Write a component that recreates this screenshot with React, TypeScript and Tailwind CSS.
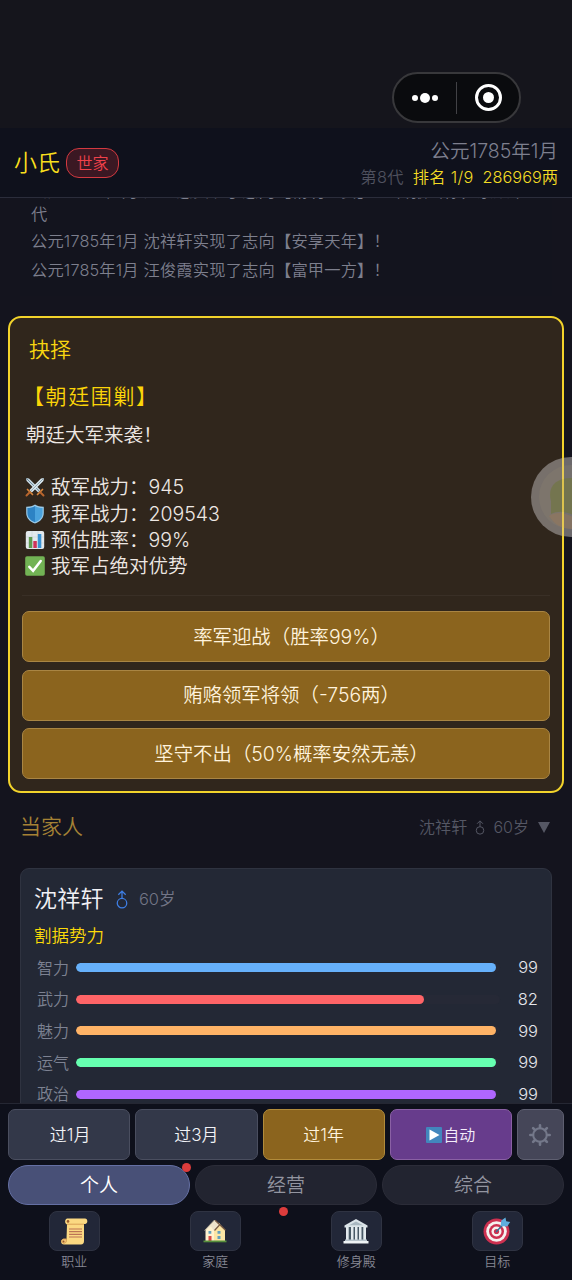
import React from "react";

const STATS = [
  { label: "智力", value: 99, color: "#66b1fb" },
  { label: "武力", value: 82, color: "#ff6467" },
  { label: "魅力", value: 99, color: "#ffb366" },
  { label: "运气", value: 99, color: "#66ffb0" },
  { label: "政治", value: 99, color: "#b066ff" },
];

function Swords() {
  return (
    <svg viewBox="0 0 20 20" className="h-5 w-5">
      <path d="M1 1l3 .6L15.5 13l-2.4 2.4L1.6 4z" fill="#c9dbe6" />
      <path d="M1 1l13.4 13.2" stroke="#6d8795" strokeWidth="1" />
      <path d="M19 1l-3 .6L4.500 13l2.4 2.4L18.4 4z" fill="#dce9f0" />
      <path d="M19 1L5.600 14.200" stroke="#8ba3b0" strokeWidth="1" />
      <path d="M2.500 12.500l5 5M17.500 12.500l-5 5" stroke="#d8843b" strokeWidth="1.700" strokeLinecap="round" />
      <path d="M4.500 15.500l-3 3M15.500 15.500l3 3" stroke="#b9652d" strokeWidth="2" strokeLinecap="round" />
    </svg>
  );
}

function Shield() {
  return (
    <svg viewBox="0 0 20 20" className="h-5 w-5">
      <path d="M10 .6C7.500 2.200 4.500 2.900 1.200 2.800v6C1.200 14 4.500 17.600 10 19.600c5.500-2 8.800-5.600 8.800-10.800v-6C15.500 2.900 12.500 2.200 10 .6z" fill="#9ccbe8" />
      <path d="M10 2C7.700 3.400 5.200 4 2.400 4v5c0 4.400 2.800 7.500 7.600 9.300z" fill="#2d83c4" />
      <path d="M10 2c2.300 1.400 4.800 2 7.600 2v5c0 4.400-2.800 7.500-7.600 9.300z" fill="#4ba3dd" />
    </svg>
  );
}

function Chart() {
  return (
    <svg viewBox="0 0 20 20" className="h-5 w-5">
      <rect x=".8" y="1" width="18.400" height="18" rx="2" fill="#e3e9ec" />
      <path d="M7 1v18M13 1v18M1 7h18M1 13h18" stroke="#cbd5da" strokeWidth=".6" />
      <rect x="3.800" y="7" width="3.500" height="11" fill="#5f9a50" />
      <rect x="8.300" y="11" width="3.500" height="7" fill="#cf3359" />
      <rect x="12.800" y="4" width="3.500" height="14" fill="#3b93d3" />
    </svg>
  );
}

function Check() {
  return (
    <svg viewBox="0 0 20 20" className="h-5 w-5">
      <rect x=".2" y=".3" width="19.600" height="19.400" rx="1.800" fill="#72b354" />
      <path d="M4.300 10.800l3.800 4L15.700 5" fill="none" stroke="#fff" strokeWidth="2.500" strokeLinecap="round" />
    </svg>
  );
}

function Male({ className }: { className: string }) {
  return (
    <svg viewBox="0 0 12 18" className={className} fill="none" stroke="currentColor" strokeWidth="1.200">
      <circle cx="6" cy="12.500" r="4.500" />
      <path d="M6 8V1.200M2.500 4.500L6 1l3.500 3.500" />
    </svg>
  );
}

function Scroll() {
  return (
    <svg viewBox="0 0 28 28" className="h-7 w-7">
      <path d="M7 1.500h18c3 0 3.200 5 0 5.500h-1v17c0 2-1 3.500-3 3.500H4c-3.500 0-4-5-.5-5.500h3L7 7.500C4.500 6.500 4.500 2.500 7 1.500z" fill="#fbd982" />
      <path d="M7 7.200h17M6.500 22h-3c-2.800 1-2 4.200.5 4.200 2 0 2.500-1.500 2.500-4.200z" stroke="#d9a056" strokeWidth="1" fill="#f4c779" />
      <circle cx="8" cy="4.400" r="1.300" fill="#96582b" />
      <path d="M9 12h13M9 14.700h13M9 17.400h13M9 20h13" stroke="#bc7355" strokeWidth="1.200" />
      <circle cx="3.500" cy="24.500" r="1" fill="#96582b" />
    </svg>
  );
}

function House() {
  return (
    <svg viewBox="0 0 24 24" className="h-6 w-6">
      <path d="M2.500 11L8 5l5 6v11H2.500z" fill="#fff2cf" />
      <path d="M11 10l5-6 6 7V22H11z" fill="#fce6a5" />
      <path d="M1.500 11.500L11.500 1l5.500 4-6 7L8 7.500z" fill="#eee3cb" />
      <path d="M12 1.200l10.500 10M11.500 11.500L16.500 6" stroke="#795b45" strokeWidth="1.200" />
      <path d="M1.500 11.500L11.500 1" stroke="#b8ae98" strokeWidth=".8" />
      <rect x="5.500" y="17" width="3" height="5" fill="#d84945" />
      <path d="M5.500 12h2.800v2.800H5.500zM14.500 12h3v2.800h-3zM14.500 17h3v3h-3z" fill="#63a1bd" />
      <rect x=".5" y="21.500" width="23" height="1.800" fill="#578f3c" />
    </svg>
  );
}

function Temple() {
  return (
    <svg viewBox="0 0 26 26" className="h-[26px] w-[26px]">
      <path d="M1.500 7.500L13 1l11.500 6.500v2h-23z" fill="#dbe4e9" />
      <path d="M6 7.300L13 3.500l7 3.800z" fill="#a8b7c0" />
      <rect x="3" y="9" width="20" height="14" fill="#485966" />
      <path d="M3 9h2.700v13H3zM8 9h2.500v13H8zM12 9h2.500v13H12zM16 9h2.500v13H16zM20.300 9H23v13h-2.700z" fill="#e3eaee" />
      <path d="M2 21.500h22V23H2z" fill="#b7c4cc" />
      <path d="M.5 23h25v2.500H.5z" fill="#eef3f5" />
    </svg>
  );
}

function Target() {
  return (
    <svg viewBox="0 0 28 28" className="h-7 w-7">
      <circle cx="13.500" cy="14.500" r="13" fill="#cd3050" />
      <circle cx="13.500" cy="14.500" r="10.300" fill="#f5f1ef" />
      <circle cx="13.500" cy="14.500" r="7.500" fill="#cd3050" />
      <circle cx="13.500" cy="14.500" r="5" fill="#f5f1ef" />
      <circle cx="13.500" cy="14.500" r="2.600" fill="#cd3050" />
      <path d="M13 15l8-8.500" stroke="#2f7195" strokeWidth="1.400" />
      <path d="M17.500 9l.8-5.500L22.500.5l.7 3.800 4 .7-3 4.500z" fill="#5eaede" />
    </svg>
  );
}

function Gear() {
  return (
    <svg viewBox="0 0 22 22" className="h-[22px] w-[22px]" fill="none" stroke="#74788a">
      <circle cx="11" cy="11" r="6.800" strokeWidth="2" />
      <path
        d="M11 1.300v2.700M11 18v2.700M1.300 11H4M18 11h2.700M4.100 4.100L6 6M16 16l1.900 1.900M17.900 4.100L16 6M6 16l-1.900 1.900"
        strokeWidth="2.600"
        strokeLinecap="round"
      />
    </svg>
  );
}

const NAV = [
  { label: "职业", icon: <Scroll /> },
  { label: "家庭", icon: <House /> },
  { label: "修身殿", icon: <Temple /> },
  { label: "目标", icon: <Target /> },
];

export default function App() {
  return (
    <div className="relative flex h-[1280px] w-[572px] flex-col overflow-hidden bg-[#14141e] font-['Inter','Noto_Sans_CJK_SC',sans-serif] font-[350] whitespace-nowrap">
      <div className="flex h-32 shrink-0 justify-end bg-[#15151c] pt-[72px] pr-[51px]">
        <div className="flex h-[51px] w-[129px] items-center rounded-full border-2 border-[#38383b] bg-[#0a0b0e]">
          <div className="flex w-[61px] items-center justify-center gap-[2px]">
            <i className="h-[6px] w-[6px] rounded-full bg-white" />
            <i className="h-[10px] w-[10px] rounded-full bg-white" />
            <i className="h-[6px] w-[6px] rounded-full bg-white" />
          </div>
          <div className="ml-px h-8 w-px bg-[#424246]" />
          <div className="flex flex-1 justify-center pl-px">
            <div className="flex h-[27px] w-[27px] items-center justify-center rounded-full border-[3px] border-white">
              <i className="h-[11px] w-[11px] rounded-full bg-white" />
            </div>
          </div>
        </div>
      </div>

      <header className="flex h-[70px] shrink-0 items-center justify-between border-b border-[#2b2d3b] bg-[#0f111c] pr-[14px] pl-[14px]">
        <div className="flex items-center gap-[6px]">
          <span className="pt-px text-[23px] leading-8 text-[#f8df1c]">小氏</span>
          <span className="flex h-[30px] w-[53px] items-center justify-center rounded-[13px] border border-[#d33940] bg-[#3b1823] text-[16px] text-[#f0414a]">
            世家
          </span>
        </div>
        <div className="flex flex-col items-end pt-[3px]">
          <span className="text-[19.500px] leading-[26px] text-[#7d7f8e]">公元1785年1月</span>
          <span className="flex text-[16.300px] leading-[26px] text-[#f4dc24]">
            <span className="mr-[9px] tracking-[0.300px] text-[#50525f]">第8代</span>
            <span className="mr-[9px] tracking-[0.300px]">排名 1/9</span>
            <span>286969两</span>
          </span>
        </div>
      </header>

      <main className="flex h-[905px] shrink-0 flex-col overflow-hidden">
        <section className="mx-5 h-[98px] shrink-0 overflow-hidden bg-[#13141e] pl-[11px] text-[16.300px] tracking-[0.150px] text-[#7d7f8d]">
          <div className="-mt-[18px] h-[22px] leading-[22px]">公元1785年1月 汪益志实现了志向【精明进贤】！ 曾报当你，家族下一世</div>
          <div className="h-[22px] leading-[24px]">代</div>
          <div className="mt-1 h-[29px] leading-[27px]">公元1785年1月 沈祥轩实现了志向【安享天年】！</div>
          <div className="h-[29px] leading-[27px]">公元1785年1月 汪俊霞实现了志向【富甲一方】！</div>
        </section>

        <section className="mx-2 mt-5 flex h-[477px] shrink-0 flex-col rounded-[13px] border-2 border-[#f2d32b] bg-[#30261c] px-3">
          <h2 className="mt-[17px] ml-[7px] text-[21px] leading-[30px] text-[#f8d510]">抉择</h2>
          <h3 className="mt-[17px] ml-[1px] text-[21px] leading-[30px] tracking-[1.600px] text-[#fcd508]">【朝廷围剿】</h3>
          <div className="ml-1 text-[19.500px] text-[#eee8e4]">
            <p className="mt-[10px] leading-[26px]">朝廷大军来袭！</p>
            <p className="-ml-[1px] mt-[26px] flex h-[26px] items-center gap-[6px]"><Swords /><span className="pt-[2px]">敌军战力：945</span></p>
            <p className="-ml-[1px] flex h-[27px] items-center gap-[6px]"><Shield /><span className="pt-[2px]">我军战力：209543</span></p>
            <p className="-ml-[1px] flex h-[26px] items-center gap-[6px]"><Chart /><span className="pt-[2px]">预估胜率：99%</span></p>
            <p className="-ml-[1px] flex h-[26px] items-center gap-[6px]"><Check /><span className="pt-[2px]">我军占绝对优势</span></p>
          </div>
          <div className="mt-4 h-px shrink-0 bg-[#392f26]" />
          <div className="mt-[15px] flex flex-col gap-[7.500px] text-[19.400px] text-[#fff3dd]">
            {["率军迎战（胜率99%）", "贿赂领军将领（-756两）", "坚守不出（50%概率安然无恙）"].map((t) => (
              <button key={t} className="h-[51px] rounded-[7px] border border-[#a98543] bg-[#8b641e] pt-[2px] pl-[11px]">
                {t}
              </button>
            ))}
          </div>
        </section>

        <div className="flex h-[75px] shrink-0 items-center justify-between pr-[22px] pb-[7px] pl-[20px]">
          <span className="text-[21px] text-[#a58235]">当家人</span>
          <span className="flex items-center text-[16px] text-[#555764]">
            <span className="tracking-[0.200px]">沈祥轩</span>
            <Male className="mx-[8px] h-[15px] w-[10px]" />
            <span>60岁</span>
            <svg viewBox="0 0 12 11" className="ml-[9px] h-[11px] w-3" fill="currentColor"><path d="M0 0h12L6 11z" /></svg>
          </span>
        </div>

        <section className="mx-5 h-[300px] shrink-0 rounded-[9px] border border-[#2f3340] bg-[#232835] px-[13px]">
          <div className="mt-[14px] flex h-8 items-center">
            <span className="text-[23px] tracking-[0.300px] text-[#f1f1f5]">沈祥轩</span>
            <Male className="ml-[11px] h-[19px] w-[14px] text-[#3e7fe6]" />
            <span className="ml-[10px] text-[16.500px] text-[#737687]">60岁</span>
          </div>
          <div className="mt-[6px] h-[31px] text-[17.500px] leading-[29px] text-[#fcda08]">割据势力</div>
          {STATS.map((s) => (
            <div key={s.label} className="flex h-[31.600px] items-center">
              <span className="ml-[3px] w-[39px] text-[16px] text-[#7d8292]">{s.label}</span>
              <div className="h-[9px] w-[424px] overflow-hidden rounded-full bg-[#262936]">
                <div className="h-full rounded-full" style={{ width: `${s.value}%`, backgroundColor: s.color }} />
              </div>
              <span className="w-[38px] text-right text-[16.500px] text-[#e5e6eb]">{s.value}</span>
            </div>
          ))}
        </section>
      </main>

      <footer className="h-[177px] shrink-0 border-t border-[#252733] bg-[#0e101b]">
        <div className="mt-[5px] flex gap-[5px] px-2 text-[17px]">
          <button className="h-[51px] w-[122.300px] rounded-[7px] border border-[#4a4e5f] bg-[#333849] pt-[2px] pl-[2px] text-[#f1f2f6]">过1月</button>
          <button className="h-[51px] w-[122.300px] rounded-[7px] border border-[#4a4e5f] bg-[#333849] pt-[2px] text-[#f1f2f6]">过3月</button>
          <button className="h-[51px] w-[122.300px] rounded-[7px] border border-[#b18b3b] bg-[#8b641e] pt-[2px] text-[#fff3dd]">过1年</button>
          <button className="flex h-[51px] w-[122.300px] items-center justify-center gap-[1px] rounded-[7px] border border-[#8a60a4] bg-[#673c8c] text-[16px] text-[#f5eefb]">
            <svg viewBox="0 0 16 16" className="h-4 w-4"><rect width="16" height="16" rx="1" fill="#4286bd" /><path d="M3.500 2.500l10 5.500-10 5.500z" fill="#fff" /></svg>
            自动
          </button>
          <button className="flex h-[51px] w-[47px] items-center justify-center rounded-[7px] border border-[#5e5f70] bg-[#454658]"><Gear /></button>
        </div>
        <div className="mt-[5px] flex gap-[5px] px-2 text-[19px]">
          <button className="relative h-[40px] w-[182px] rounded-full border border-[#6570a4] bg-[#485077] pt-[3px] text-white">
            个人
            <i className="absolute -top-[3px] -right-[2px] h-[9px] w-[9px] rounded-full bg-[#dc3c3c]" />
          </button>
          <button className="relative h-[40px] w-[182px] rounded-full border border-[#2b2c38] bg-[#222430] pt-[3px] text-[#9395a0]">
            经营
            <i className="absolute top-[41px] left-[83px] h-[9px] w-[9px] rounded-full bg-[#dc3c3c]" />
          </button>
          <button className="h-[40px] w-[182px] rounded-full border border-[#2b2c38] bg-[#222430] pt-[3px] text-[#9395a0]">综合</button>
        </div>
        <nav className="mt-[6px] flex gap-[90.500px] pl-[49px]">
          {NAV.map((n) => (
            <div key={n.label} className="flex w-[50.500px] flex-col items-center">
              <div className="flex h-[40px] w-full items-center justify-center rounded-[8px] border border-[#2f3342] bg-[#222738]">{n.icon}</div>
              <span className="text-[13px] leading-[20px] text-[#858793]">{n.label}</span>
            </div>
          ))}
        </nav>
      </footer>

      <div className="absolute top-[457px] left-[531px] h-20 w-20">
        <svg viewBox="0 0 80 80" className="h-20 w-20">
          <circle cx="40" cy="40" r="40" fill="#a6a1a0" fillOpacity=".6" />
          <circle cx="40" cy="40" r="32" fill="#958b75" fillOpacity=".2" />
          <path d="M20 57V44c-4-14 5-24 22-23v37c-9-4-15-4-22-1z" fill="#727646" fillOpacity=".75" />
          <path d="M18 59c8-5 16-3 24 1v12c-11 0-18-4-24-13z" fill="#a37750" fillOpacity=".35" />
          <path d="M32 1v78" stroke="#f1d34d" strokeWidth="2" strokeOpacity=".8" />
        </svg>
      </div>
    </div>
  );
}
